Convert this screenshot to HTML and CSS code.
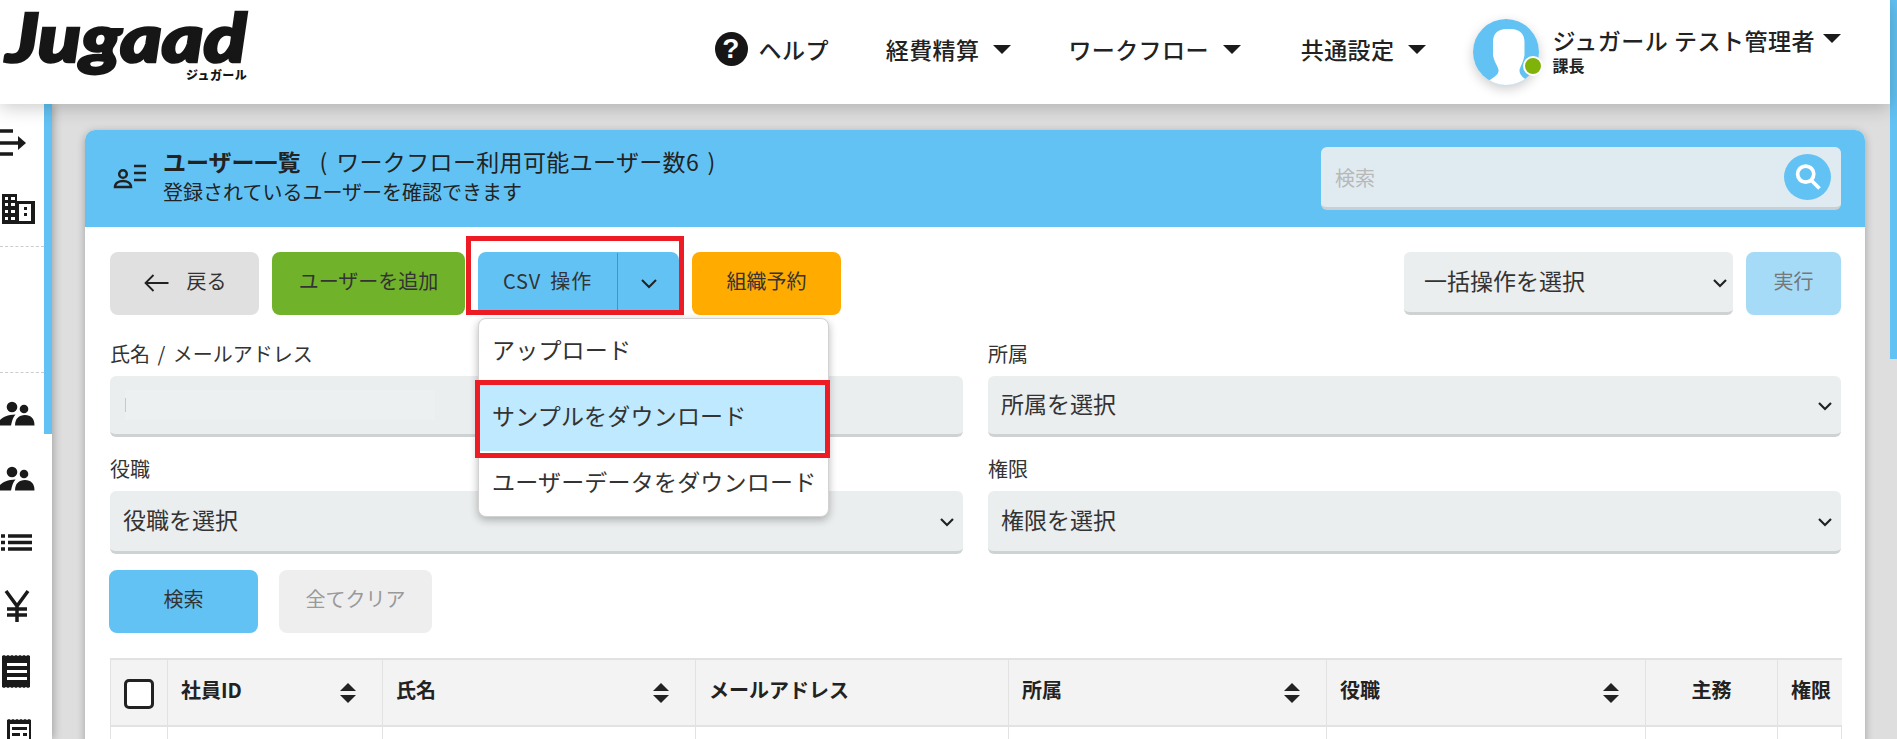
FILE: index.html
```html
<!DOCTYPE html>
<html lang="ja">
<head>
<meta charset="utf-8">
<title>ユーザー一覧</title>
<link rel="stylesheet" href="styles.css">
</head>
<body>
<div class="page">
  <header class="topbar">
    <a class="logo"><span class="logo-word">Jugaad</span><span class="logo-sub">ジュガール</span></a>
    <nav class="nav">
      <a class="nav-item nav-help"><span class="help-icon">?</span><span class="help-text">ヘルプ</span></a>
      <a class="nav-item nav-expense"><span>経費精算</span><i class="caret"></i></a>
      <a class="nav-item"><span>ワークフロー</span><i class="caret"></i></a>
      <a class="nav-item"><span>共通設定</span><i class="caret"></i></a>
      <div class="user">
        <div class="avatar">
          <svg width="66" height="66" viewBox="0 0 66 66"><defs><clipPath id="av"><circle cx="33" cy="33" r="33"/></clipPath></defs><circle cx="33" cy="33" r="33" fill="#62c2f3"/><path clip-path="url(#av)" fill="#fff" d="M33.5 10c-9 0-13.500 5-13.500 13v13c1 7 5 11 5.500 15 .3 3-1 6-14 13l-2 4v10h50V64c-11-5-13-9-13-13 1-4 4-8 5-15V23c0-8-5-13-13.500-13z"/></svg>
          <span class="status"></span>
        </div>
        <div class="user-text">
          <div class="user-name"><span>ジュガール テスト管理者</span><i class="caret"></i></div>
          <div class="user-role">課長</div>
        </div>
      </div>
    </nav>
  </header>
  <div class="shell">
    <aside class="sidebar">
      <div class="rail">
        <div class="rail-row"><svg class="ri" viewBox="0 0 44 65"><path d="M0 21h13M0 33h19M0 44h13" stroke="#1a1a1a" stroke-width="3.500" fill="none"/><path d="M18 26l8 7-8 7z" fill="#1a1a1a"/></svg></div>
        <div class="rail-row"><svg class="ri" viewBox="0 0 44 65"><path d="M2 19h15v7h18v23H2z" fill="#1a1a1a"/><path d="M19 29h12v17H19z" fill="#fff"/><path fill="#fff" d="M5 22h3v3H5zM11 22h4v3h-4zM5 28h3v3H5zM11 28h4v3h-4zM5 35h3v3H5zM11 35h4v3h-4zM5 42h3v3H5zM11 42h4v3h-4z"/><path fill="#1a1a1a" d="M24 32h3v3h-3zM24 38h3v3h-3z"/></svg></div>
        <div class="rail-gap"></div>
        <div class="rail-row"><svg class="ri" viewBox="0 0 44 65"><use href="#people"/></svg></div>
        <div class="rail-row"><svg class="ri" viewBox="0 0 44 65"><defs><g id="people"><circle cx="12" cy="26" r="5.300"/><circle cx="24" cy="28" r="4.300"/><path d="M15 44.500c0-7 4-10.500 10-10.500s9.500 3.500 9.500 10.500z"/><path d="M-2 44.500c0-6 6-10.500 17.500-11-2.500 2.500-3.500 6.500-4.500 11z"/></g></defs><use href="#people"/></svg></div>
        <div class="rail-row"><svg class="ri" viewBox="0 0 44 65"><path d="M1 25h4M8 25h24M1 31.500h4M8 31.500h24M1 38h4M8 38h24" stroke="#1a1a1a" stroke-width="3.500" fill="none"/></svg></div>
        <div class="rail-row"><svg class="ri" viewBox="0 0 44 65"><path d="M6 15l11 15 11-15M17 30v16M7 33h20M7 39h20" stroke="#1a1a1a" stroke-width="3.500" fill="none"/></svg></div>
        <div class="rail-row"><svg class="ri" viewBox="0 0 44 65"><path fill="#1a1a1a" d="M2 15l2-1 2 1 2-1 2 1 2-1 2 1 2-1 2 1 2-1 2 1 2-1 2 1 2-1 2 1v31l-2 1-2-1-2 1-2-1-2 1-2-1-2 1-2-1-2 1-2-1-2 1-2-1-2 1-2-1z"/><path fill="#fff" d="M7 22h20v3H7zM7 29h20v3H7zM7 36h20v3H7z"/></svg></div>
        <div class="rail-row"><svg class="ri" viewBox="0 0 44 65"><path fill="#1a1a1a" d="M7 14l2-1 2 1 2-1 2 1 2-1 2 1 2-1 2 1 2-1 2 1 2-1 2 1v40H7z"/><path fill="#fff" d="M10 18h19v30H10z"/><path fill="#1a1a1a" d="M12 21h15v3H12zM12 27h8v3h-8zM23 27h4v3h-4z"/></svg></div>
      </div>
      <div class="stripe"></div>
    </aside>
    <main class="content">
      <section class="card">
        <div class="card-head">
          <svg class="head-icon" width="34" height="26" viewBox="0 0 34 26" fill="none" stroke="#222" stroke-width="2.500"><circle cx="10" cy="10" r="3.800"/><path d="M2 23c0-4 4-6 8-6s8 2 8 6z"/><path d="M21 2h12M21 9h12M21 16h12"/></svg>
          <div class="head-text">
            <div class="head-title"><b>ユーザー一覧</b><span class="head-count">( ワークフロー利用可能ユーザー数6 )</span></div>
            <div class="head-sub">登録されているユーザーを確認できます</div>
          </div>
          <div class="head-search">
            <span class="ph">検索</span>
            <span class="search-btn"><svg width="30" height="30" viewBox="0 0 26 26" fill="none" stroke="#fff" stroke-width="3.200"><circle cx="11" cy="10.500" r="7"/><path d="M16 16l7 7"/></svg></span>
          </div>
        </div>
        <div class="card-body">
          <div class="toolbar">
            <a class="btn btn-back"><svg width="27" height="20" viewBox="0 0 26 20" fill="none" stroke="#222" stroke-width="1.800"><path d="M25 10H2M10 2l-8 8 8 8"/></svg><span>戻る</span></a>
            <a class="btn btn-green">ユーザーを追加</a>
            <div class="csv">
              <a class="csv-main">CSV 操作</a>
              <a class="csv-toggle"><svg width="16" height="10" viewBox="0 0 16 10" fill="none" stroke="#222" stroke-width="2"><path d="M1 1l7 7 7-7"/></svg></a>
              <span class="frame frame-csv"></span>
              <div class="menu">
                <a class="menu-item">アップロード</a>
                <a class="menu-item menu-active">サンプルをダウンロード<span class="frame frame-item"></span></a>
                <a class="menu-item">ユーザーデータをダウンロード</a>
              </div>
            </div>
            <a class="btn btn-orange">組織予約</a>
            <div class="bulk">
              <div class="select select-bulk"><span>一括操作を選択</span><svg class="chev" viewBox="0 0 14 9"><path d="M1 1l6 6 6-6"/></svg></div>
              <a class="btn btn-run">実行</a>
            </div>
          </div>
          <div class="filters">
            <div class="field"><label class="lbl">氏名 / メールアドレス</label><div class="input"><span class="mask"></span></div></div>
            <div class="field"><label class="lbl">所属</label><div class="select select-short"><span>所属を選択</span><svg class="chev" viewBox="0 0 14 9"><path d="M1 1l6 6 6-6"/></svg></div></div>
            <div class="field"><label class="lbl">役職</label><div class="select"><span>役職を選択</span><svg class="chev" viewBox="0 0 14 9"><path d="M1 1l6 6 6-6"/></svg></div></div>
            <div class="field"><label class="lbl">権限</label><div class="select"><span>権限を選択</span><svg class="chev" viewBox="0 0 14 9"><path d="M1 1l6 6 6-6"/></svg></div></div>
          </div>
          <div class="actions">
            <a class="btn btn-search">検索</a>
            <a class="btn btn-clear">全てクリア</a>
          </div>
          <table class="tbl">
            <colgroup><col class="c0"><col class="c1"><col class="c2"><col class="c3"><col class="c4"><col class="c5"><col class="c6"><col class="c7"></colgroup>
            <thead>
              <tr>
                <th class="th-check"><span class="check"></span></th>
                <th><div class="th-in"><span>社員ID</span><i class="sort"></i></div></th>
                <th><div class="th-in"><span>氏名</span><i class="sort"></i></div></th>
                <th><div class="th-in"><span>メールアドレス</span></div></th>
                <th><div class="th-in"><span>所属</span><i class="sort"></i></div></th>
                <th><div class="th-in"><span>役職</span><i class="sort"></i></div></th>
                <th class="th-center">主務</th>
                <th>権限</th>
              </tr>
            </thead>
            <tbody><tr><td></td><td></td><td></td><td></td><td></td><td></td><td></td><td></td></tr></tbody>
          </table>
        </div>
      </section>
    </main>
  </div>
</div>
<div class="scrollbar"><div class="thumb"></div></div>
</body>
</html>
```
FILE: styles.css
```css
* { box-sizing: border-box; }
html, body { margin: 0; height: 739px; overflow: hidden; }
body {
  display: flex;
  background: #dedede;
  color: #222;
  font-family: "Noto Sans CJK JP", "Noto Sans", sans-serif;
  font-size: 20px;
}
a { color: inherit; text-decoration: none; }
.page { width: 1890px; display: flex; flex-direction: column; height: 739px; }
.scrollbar { width: 7px; background: #dedede; }
.thumb { height: 359px; background: #62c2f3; }

/* header */
.topbar {
  height: 104px;
  flex: none;
  background: #fff;
  display: flex;
  align-items: center;
  justify-content: space-between;
  padding: 0 49px 0 3px;
  position: relative;
  z-index: 3;
  box-shadow: 0 3px 18px rgba(0,0,0,.22);
}
.logo { display: block; position: relative; width: 260px; height: 90px; margin-bottom: 14px; }
.logo-word {
  position: absolute;
  left: 3px;
  top: 7px;
  font-family: "Lato", sans-serif;
  font-weight: 900;
  font-style: italic;
  font-size: 66px;
  line-height: 60px;
  color: #161616;
  -webkit-text-stroke: 2.500px #161616;
  transform: scaleX(1.2);
  transform-origin: left center;
}
.logo-sub {
  position: absolute;
  left: 183px;
  top: 67px;
  font-size: 12px;
  line-height: 16px;
  font-weight: 900;
  color: #161616;
  letter-spacing: .4px;
  white-space: nowrap;
}
.nav { display: flex; align-items: center; gap: 60px; height: 100%; }
.nav-item {
  display: flex;
  align-items: center;
  gap: 14px;
  font-size: 23px;
  font-weight: 500;
  line-height: 30px;
  padding-bottom: 6px;
  letter-spacing: .4px;
  white-space: nowrap;
}
.nav-help { gap: 11px; margin-right: -3px; }
.nav-expense { margin-right: -3px; }
.help-icon {
  width: 33px;
  height: 34px;
  border-radius: 50%;
  background: #161616;
  color: #fff;
  font-family: "Liberation Sans", sans-serif;
  font-weight: 700;
  font-size: 28px;
  line-height: 34px;
  text-align: center;
}
.help-text { font-weight: 500; }
.caret {
  display: block;
  width: 0;
  height: 0;
  border-left: 9px solid transparent;
  border-right: 9px solid transparent;
  border-top: 9px solid #1a1a1a;
}
.user { display: flex; align-items: center; gap: 13px; margin-left: -13px; height: 100%; }
.avatar { position: relative; width: 66px; height: 66px; border-radius: 50%; box-shadow: 0 4px 12px rgba(0,0,0,.2); }
.avatar svg { display: block; }
.status {
  position: absolute;
  left: 50px;
  top: 37px;
  width: 20px;
  height: 20px;
  border-radius: 50%;
  background: #80b30a;
  border: 2px solid #fff;
}
.user-text { margin-top: -5px; }
.user-name { display: flex; align-items: flex-start; gap: 8px; font-size: 23px; font-weight: 500; line-height: 30px; letter-spacing: .5px; white-space: nowrap; }
.user-name .caret { margin-top: 9px; }
.user-role { font-size: 16px; font-weight: 700; line-height: 20px; }

/* shell */
.shell { flex: 1; display: flex; min-height: 0; }
.sidebar {
  width: 52px;
  flex: none;
  background: #fff;
  display: flex;
  align-items: flex-start;
  position: relative;
  z-index: 2;
  box-shadow: 2px 0 8px rgba(0,0,0,.25);
}
.rail { width: 44px; padding-top: 6px; overflow: hidden; height: 635px; flex: none; background: #fff; }
.rail-row { height: 65px; }
.ri { display: block; width: 44px; height: 65px; fill: #1a1a1a; }
.rail-gap {
  height: 127px;
  margin: 6px 0 8px;
  border-top: 1px dashed #ccc;
  border-bottom: 1px dashed #ccc;
}
.stripe { width: 8px; height: 330px; background: #62c2f3; }

.content { flex: 1; padding: 26px 25px 0 33px; min-width: 0; overflow: hidden; }
.card {
  width: 1780px;
  background: #fff;
  border-radius: 10px 10px 0 0;
  box-shadow: 0 2px 8px rgba(0,0,0,.28);
  height: 640px;
}
.card-head {
  height: 97px;
  background: #62c2f3;
  border-radius: 10px 10px 0 0;
  display: flex;
  align-items: center;
  padding: 0 24px 0 28px;
}
.head-icon { flex: none; margin: -3px 16px 0 0; }
.head-text { flex: 1; margin-top: -3px; }
.head-title { font-size: 23px; line-height: 32px; white-space: nowrap; margin-top: -2px; }
.head-title b { font-weight: 700; }
.head-count { margin-left: 19px; letter-spacing: .35px; word-spacing: 3px; }
.head-sub { font-size: 20px; line-height: 30px; }
.head-search {
  width: 520px;
  height: 63px;
  background: #e0ebf1;
  border-bottom: 3px solid #c9cfd3;
  border-radius: 6px;
  display: flex;
  align-items: center;
  justify-content: space-between;
  padding: 0 10px 0 14px;
}
.ph { font-size: 20px; color: #b8b8b8; }
.search-btn {
  width: 47px;
  height: 46px;
  border-radius: 50%;
  background: #62c2f3;
  display: flex;
  align-items: center;
  justify-content: center;
}

.card-body { padding: 25px 24px 0 25px; }
.toolbar { display: flex; gap: 13px; height: 63px; }
.btn {
  height: 63px;
  border-radius: 8px;
  display: flex;
  align-items: center;
  justify-content: center;
  font-size: 20px;
  line-height: 28px;
  padding-bottom: 5px;
  white-space: nowrap;
  color: #333;
}
.btn-back { width: 149px; background: #e0e0e0; gap: 17px; }
.btn-back svg { margin-top: 3px; }
.btn-green { width: 193px; background: #70b22a; }
.btn-orange { width: 149px; background: #ffab00; }
.csv { width: 201px; position: relative; display: flex; background: #62c2f3; border-radius: 8px 8px 0 0; height: 63px; }
.csv-main { width: 140px; display: flex; align-items: center; justify-content: center; padding-bottom: 3px; border-right: 1px solid #4a92b8; margin: 1px 0 5px; color: #333; white-space: nowrap; letter-spacing: .8px; word-spacing: 4px; }
.csv-toggle { flex: 1; display: flex; align-items: center; justify-content: center; }
.frame { position: absolute; border: 5px solid #ed1c24; pointer-events: none; }
.frame-csv { left: -12px; top: -16px; width: 218px; height: 79px; z-index: 4; }
.menu {
  position: absolute;
  left: 0;
  top: 66px;
  width: 351px;
  height: 199px;
  background: #fff;
  border: 1px solid #d2d2d2;
  border-radius: 8px;
  box-shadow: 0 3px 8px rgba(0,0,0,.28);
  z-index: 5;
}
.menu-item {
  display: flex;
  align-items: center;
  height: 66px;
  padding: 0 0 6px 13px;
  font-size: 23px;
  letter-spacing: .2px;
  color: #333;
  white-space: nowrap;
  position: relative;
}
.menu-active { background: #bfe9ff; }
.frame-item { left: -4px; right: -2px; top: -5px; bottom: -7px; }
.bulk { margin-left: auto; display: flex; gap: 13px; }
.btn-run { width: 95px; background: #a5dbf7; color: #777; }
.select {
  height: 63px;
  background: #ebeeef;
  border-bottom: 3px solid #cfd2d3;
  border-radius: 6px;
  display: flex;
  align-items: center;
  justify-content: space-between;
  padding: 0 9px 4px 13px;
  font-size: 23px;
  color: #333;
}
.select-short { height: 61px; }
.select-bulk { width: 329px; padding-left: 20px; padding-right: 6px; }
.chev { width: 14px; height: 9px; fill: none; stroke: #222; stroke-width: 2.200; margin-top: 6px; }
.filters { display: grid; grid-template-columns: 853px 853px; column-gap: 25px; row-gap: 17px; margin-top: 24px; }
.lbl { display: block; height: 30px; line-height: 30px; margin-bottom: 7px; font-size: 20px; word-spacing: 3px; color: #333; }
.input {
  height: 61px;
  background: #ebeeef;
  border-bottom: 3px solid #cfd2d3;
  border-radius: 6px;
  padding: 14px 0 0 15px;
}
.mask { display: flex; align-items: center; width: 310px; height: 30px; background: #edf0f0; }
.mask::before { content: ""; width: 1px; height: 14px; background: #c8c8c8; }
.actions { display: flex; gap: 21px; margin-top: 16px; margin-left: -1px; }
.btn-search { width: 149px; background: #62c2f3; }
.btn-clear { width: 153px; background: #eee; color: #999; }
.tbl {
  border-collapse: collapse;
  table-layout: fixed;
  width: 1731px;
  margin-top: 25px;
  background: #fff;
}
.c0 { width: 57px; }
.c1 { width: 215px; }
.c2 { width: 313px; }
.c3 { width: 313px; }
.c4 { width: 318px; }
.c5 { width: 319px; }
.c6 { width: 132px; }
.c7 { width: 64px; }
.tbl th {
  height: 67px;
  background: #f3f3f3;
  border: 1px solid #e2e2e2;
  border-top: 2px solid #e2e2e2;
  border-bottom: 2px solid #e2e2e2;
  text-align: left;
  font-size: 20px;
  font-weight: 700;
  padding: 0 0 6px 13px;
  color: #222;
}
.tbl th:last-child { border-right: 0; }
.tbl td { height: 40px; border: 1px solid #e2e2e2; }
.tbl th.th-check { padding: 3px 0 0 13px; }
.tbl th.th-center { text-align: center; padding-left: 0; }
.check { display: block; width: 30px; height: 30px; border: 3px solid #222; border-radius: 5px; background: #fff; }
.th-in { display: flex; align-items: center; justify-content: space-between; padding-right: 26px; }
.sort { display: block; width: 16px; height: 20px; margin-top: 6px; position: relative; }
.sort::before, .sort::after {
  content: "";
  position: absolute;
  left: 0;
  border-left: 8px solid transparent;
  border-right: 8px solid transparent;
}
.sort::before { top: 0; border-bottom: 8px solid #222; }
.sort::after { bottom: 0; border-top: 8px solid #222; }
```
